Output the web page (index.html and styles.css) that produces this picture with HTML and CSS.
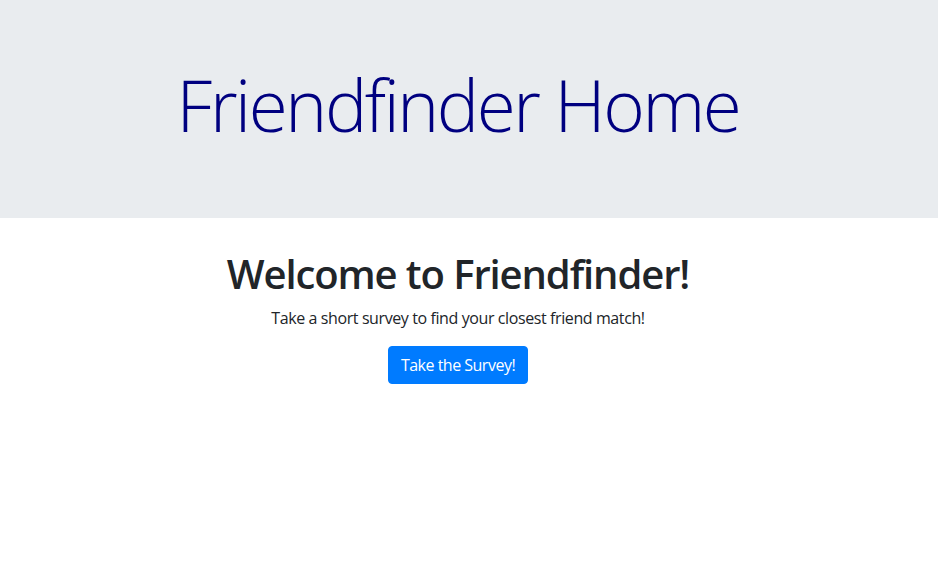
FILE: index.html
```html
<!DOCTYPE html>
<html lang="en">
<head>
<meta charset="utf-8">
<title>Friendfinder</title>
<link rel="stylesheet" href="styles.css">
</head>
<body>
<header class="jumbotron">
  <h1 class="display">Friendfinder Home</h1>
</header>
<main class="welcome">
  <h2 class="welcome-title">Welcome to Friendfinder!</h2>
  <p class="welcome-text">Take a short survey to find your closest friend match!</p>
  <a class="btn-primary" href="#">Take the Survey!</a>
</main>
</body>
</html>
```
FILE: styles.css
```css
html, body {
  margin: 0;
  padding: 0;
  background: #fff;
}
body {
  font-family: "Open Sans", "Noto Sans", sans-serif;
  color: #212529;
  font-size: 16px;
}
.jumbotron {
  box-sizing: border-box;
  height: 218px;
  background: #e9ecef;
  padding: 69px 22px 0 0;
  display: flex;
  justify-content: center;
}
.display {
  margin: 0;
  font-size: 71px;
  line-height: 72px;
  font-weight: 300;
  letter-spacing: -2.4px;
  color: #000080;
  white-space: nowrap;
}
.welcome {
  display: flex;
  flex-direction: column;
  align-items: center;
  padding: 32px 22px 0 0;
}
.welcome-title {
  margin: 0 0 8px;
  font-size: 40px;
  line-height: 48px;
  font-weight: 600;
  letter-spacing: -1.1px;
  color: #212529;
}
.welcome-text {
  margin: 0 0 16px;
  font-size: 16px;
  line-height: 24px;
  letter-spacing: -0.4px;
}
.btn-primary {
  display: inline-block;
  box-sizing: border-box;
  height: 38px;
  padding: 6px 12px;
  font-size: 16px;
  line-height: 24px;
  letter-spacing: -0.5px;
  color: #fff;
  background: #007bff;
  border: 1px solid #007bff;
  border-radius: 4px;
  text-decoration: none;
}
```
